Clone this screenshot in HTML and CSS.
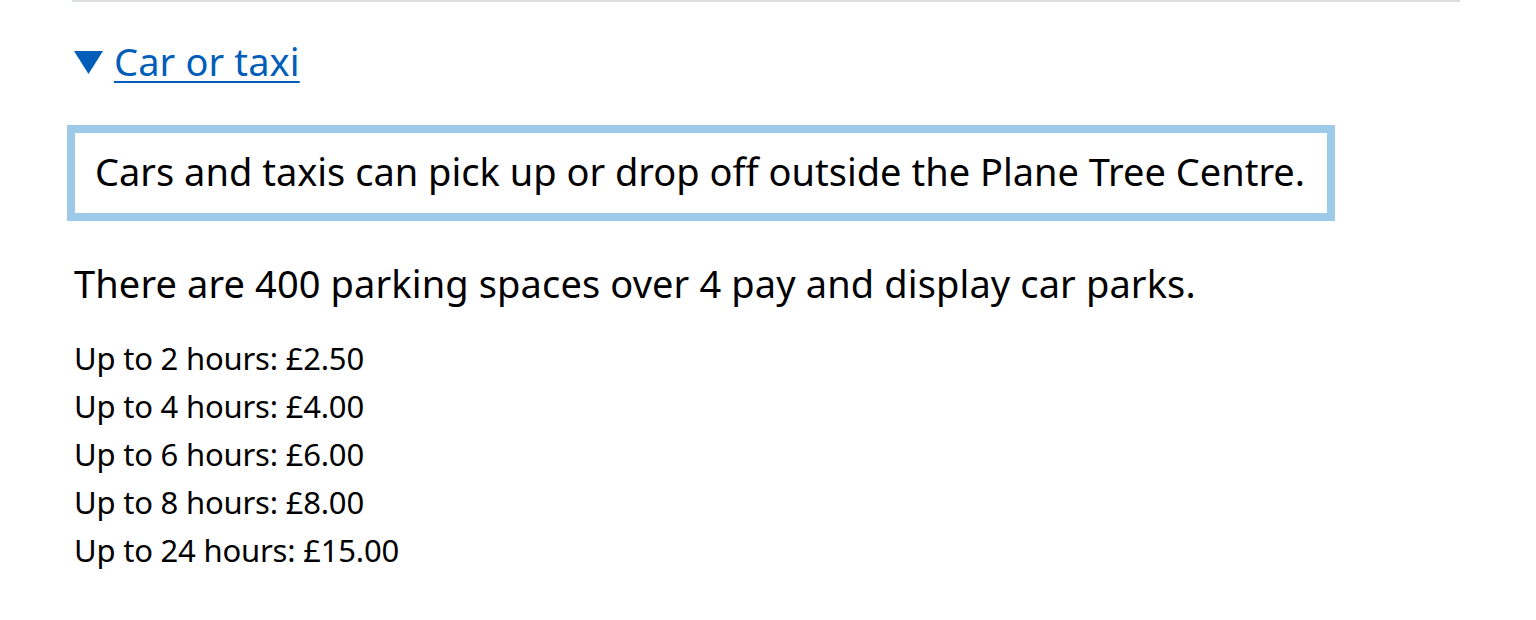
FILE: index.html
```html
<!DOCTYPE html>
<html lang="en">
<head>
<meta charset="utf-8">
<title>Car or taxi</title>
<link rel="stylesheet" href="styles.css">
</head>
<body>
<div class="page">
  <details class="details" open>
    <summary class="summary">
      <svg class="chevron" width="29" height="23" viewBox="0 0 29 23" aria-hidden="true"><polygon points="0,0 29,0 14.5,23" fill="#005eb8"/></svg>
      <span class="summary-text">Car or taxi</span>
    </summary>
    <div class="inset">Cars and taxis can pick up or drop off outside the Plane Tree Centre.</div>
    <p class="body">There are 400 parking spaces over 4 pay and display car parks.</p>
    <ul class="prices">
      <li>Up to 2 hours: £2.50</li>
      <li>Up to 4 hours: £4.00</li>
      <li>Up to 6 hours: £6.00</li>
      <li>Up to 8 hours: £8.00</li>
      <li>Up to 24 hours: £15.00</li>
    </ul>
  </details>
</div>
</body>
</html>
```
FILE: styles.css
```css
html, body {
  margin: 0;
  padding: 0;
  background: #ffffff;
}
body {
  font-family: "Noto Sans", "Open Sans", sans-serif;
  color: #000000;
}
.page {
  margin-left: 72px;
  width: 1388px;
  border-top: 2px solid #d8dde0;
}
.details {
  display: block;
}
.summary {
  list-style: none;
  display: flex;
  align-items: center;
  gap: 11px;
  margin-top: 31px;
  padding-left: 2px;
  height: 57px;
  cursor: pointer;
}
.summary::-webkit-details-marker {
  display: none;
}
.chevron {
  display: block;
  flex: none;
  margin-top: 2px;
}
.summary-text {
  font-size: 38px;
  line-height: 57px;
  color: #005eb8;
  text-decoration: underline;
  text-decoration-thickness: 2px;
  text-underline-offset: 5px;
  letter-spacing: 0.12px;
}
.inset {
  width: fit-content;
  margin-top: 35px;
  margin-left: -5px;
  border: 8px solid #9ccae8;
  padding: 10px 22px 13px 20px;
  font-size: 38px;
  line-height: 57px;
}
.body {
  margin: 34px 0 0 2px;
  font-size: 38px;
  line-height: 57px;
  letter-spacing: 0.12px;
}
.prices {
  list-style: none;
  margin: 22px 0 0 2px;
  padding: 0;
  font-size: 31px;
  line-height: 48px;
  letter-spacing: -0.2px;
}
```
